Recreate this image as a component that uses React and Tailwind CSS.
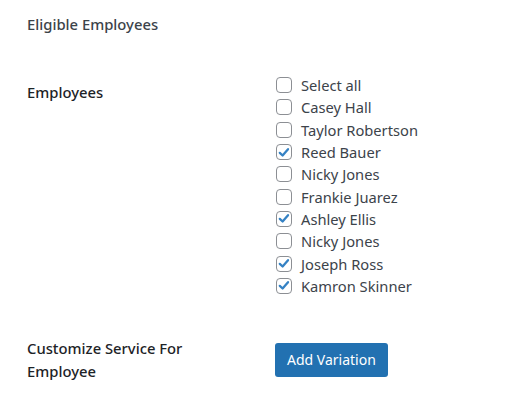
import { useState } from 'react';

const EMPLOYEES = [
  { name: 'Casey Hall', checked: false },
  { name: 'Taylor Robertson', checked: false },
  { name: 'Reed Bauer', checked: true },
  { name: 'Nicky Jones', checked: false },
  { name: 'Frankie Juarez', checked: false },
  { name: 'Ashley Ellis', checked: true },
  { name: 'Nicky Jones', checked: false },
  { name: 'Joseph Ross', checked: true },
  { name: 'Kamron Skinner', checked: true },
];

function Checkbox({ label, checked, onToggle }) {
  return (
    <label className="flex items-center h-[22.3px] cursor-pointer">
      <span
        onClick={onToggle}
        className="w-4 h-4 shrink-0 rounded-[4px] border border-[#8c8f94] bg-white flex items-center justify-center"
      >
        {checked && (
          <svg viewBox="0 0 16 16" className="w-[15px] h-[15px]">
            <path d="M3.2 8.4 L6.4 11.4 L12.6 4.2" fill="none" stroke="#3582c4" strokeWidth="2.6" strokeLinecap="round" strokeLinejoin="round" />
          </svg>
        )}
      </span>
      <span className="ml-[9px] text-[14.7px] text-[#3c434a]">{label}</span>
    </label>
  );
}

export default function App() {
  const [list, setList] = useState(EMPLOYEES);
  const allChecked = list.every((e) => e.checked);

  function toggle(i) {
    setList((prev) => prev.map((e, j) => (j === i ? { ...e, checked: !e.checked } : e)));
  }

  function toggleAll() {
    setList((prev) => prev.map((e) => ({ ...e, checked: !allChecked })));
  }

  return (
    <div className="w-[514px] h-[416px] bg-white pl-[27px] pt-[13px]" style={{ fontFamily: '"Noto Sans", sans-serif' }}>
      <h2 className="text-[14.8px] font-medium text-[#3c434a] leading-[22px]">Eligible Employees</h2>

      <div className="flex mt-[39px]">
        <div className="w-[249px] shrink-0 pt-[7px] text-[14.8px] font-medium text-[#1d2327] leading-[22px]">Employees</div>
        <div className="flex flex-col">
          <Checkbox label="Select all" checked={allChecked} onToggle={toggleAll} />
          {list.map((e, i) => (
            <Checkbox key={i} label={e.name} checked={e.checked} onToggle={() => toggle(i)} />
          ))}
        </div>
      </div>

      <div className="flex mt-[40px]">
        <div className="w-[248px] shrink-0 text-[14.8px] font-medium text-[#1d2327] leading-[23px]">
          Customize Service For<br />Employee
        </div>
        <div className="pt-[6px]">
          <button className="h-[34px] px-[12px] rounded-[3px] bg-[#2271b1] text-white text-[14px] leading-none">
            Add Variation
          </button>
        </div>
      </div>
    </div>
  );
}
